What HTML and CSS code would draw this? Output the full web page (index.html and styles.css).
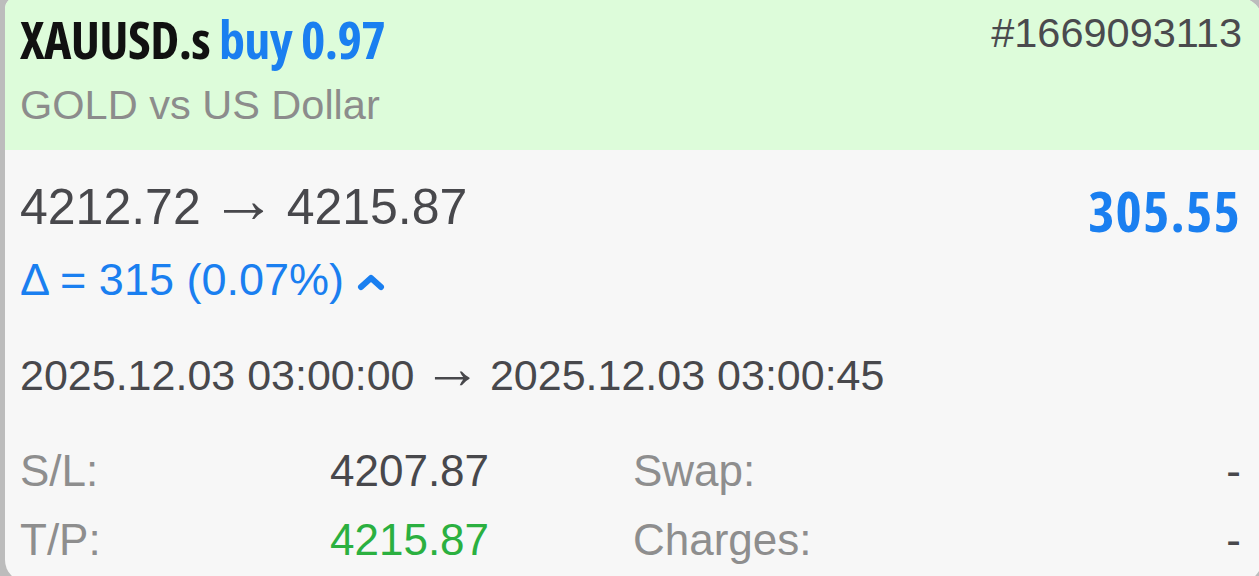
FILE: index.html
```html
<!DOCTYPE html>
<html lang="en">
<head>
    <meta charset="UTF-8">
    <meta name="viewport" content="width=device-width, initial-scale=1.0">
    <title>XAUUSD.s position</title>
    <link rel="stylesheet" href="styles.css">
</head>
<body>
    <div class="card">
        <div class="card-head">
            <div class="head-row">
                <h1 class="symbol">XAUUSD.s <span class="side">buy 0.97</span></h1>
                <span class="ticket">#1669093113</span>
            </div>
            <p class="desc">GOLD vs US Dollar</p>
        </div>

        <div class="card-body">
            <div class="price-row">
                <span class="prices">4212.72 <span class="arrow">&rarr;</span> 4215.87</span>
                <span class="profit">305.55</span>
            </div>
            <div class="delta">
                &Delta; = 315 (0.07%)
                <svg class="chevron" width="28" height="18" viewBox="0 0 28 18">
                    <path d="M4 14 L14 5 L24 14" fill="none" stroke="currentColor" stroke-width="6" stroke-linecap="round" stroke-linejoin="round"/>
                </svg>
            </div>
            <div class="times">2025.12.03 03:00:00 <span class="arrow">&rarr;</span> 2025.12.03 03:00:45</div>

            <div class="details">
                <span class="label">S/L:</span>
                <span class="value">4207.87</span>
                <span class="label">Swap:</span>
                <span class="value dash">-</span>

                <span class="label">T/P:</span>
                <span class="value tp">4215.87</span>
                <span class="label">Charges:</span>
                <span class="value dash">-</span>
            </div>
        </div>
    </div>
</body>
</html>
```

FILE: styles.css
```css
html, body {
    height: 100%;
}

body {
    margin: 0;
    padding: 0 0 0 5px;
    background-color: #bcbcbc;
    font-family: "Liberation Sans", Arial, sans-serif;
    color: #48484c;
    overflow: hidden;
}

.card {
    width: 1257px;
    height: 584px;
    margin-top: -2px;
    background-color: #f7f7f7;
    border-radius: 10px 22px 22px 22px;
    overflow: hidden;
}

.card-head {
    background-color: #ddfcda;
    padding: 11px 20px 20px 15px;
}

.head-row {
    display: flex;
    justify-content: space-between;
    align-items: flex-start;
}

.symbol {
    margin: 0;
    font-family: "Open Sans", "DejaVu Sans", sans-serif;
    font-stretch: 75%;
    font-weight: 700;
    font-size: 52px;
    line-height: 60px;
    color: #111;
    letter-spacing: -0.6px;
}

.side {
    color: #1a7ff0;
}

.ticket {
    margin-top: -1px;
    font-size: 41.5px;
    line-height: 50px;
    color: #4a4a4e;
}

.desc {
    margin: 11px 0 0;
    font-size: 41.5px;
    line-height: 50px;
    color: #8c8c8c;
}

.card-body {
    padding: 27px 21px 0 15px;
}

.price-row {
    display: flex;
    justify-content: space-between;
    align-items: flex-start;
}

.prices {
    font-size: 50px;
    line-height: 60px;
}

.arrow {
    margin: 0 -0.06em;
    font-size: 1.32em;
    line-height: 0;
    vertical-align: 0.03em;
}

.profit {
    margin-top: 3px;
    font-family: "Open Sans", "DejaVu Sans", sans-serif;
    font-stretch: 75%;
    font-weight: 700;
    font-size: 56px;
    line-height: 60px;
    letter-spacing: 1.2px;
    color: #1a7ff0;
}

.delta {
    margin-top: 12px;
    font-size: 45px;
    line-height: 56px;
    color: #1a7ff0;
}

.chevron {
    margin-left: 0;
    vertical-align: 4px;
}

.times {
    margin-top: 39px;
    font-size: 43px;
    line-height: 56px;
}

.times .arrow {
    font-size: 1.36em;
}

.details {
    margin-top: 33px;
    display: grid;
    grid-template-columns: 310px 303px 1fr auto;
    font-size: 44px;
    line-height: 69px;
}

.label {
    color: #8e8e8e;
}

.tp {
    color: #2bb040;
}

.dash {
    text-align: right;
}
```
